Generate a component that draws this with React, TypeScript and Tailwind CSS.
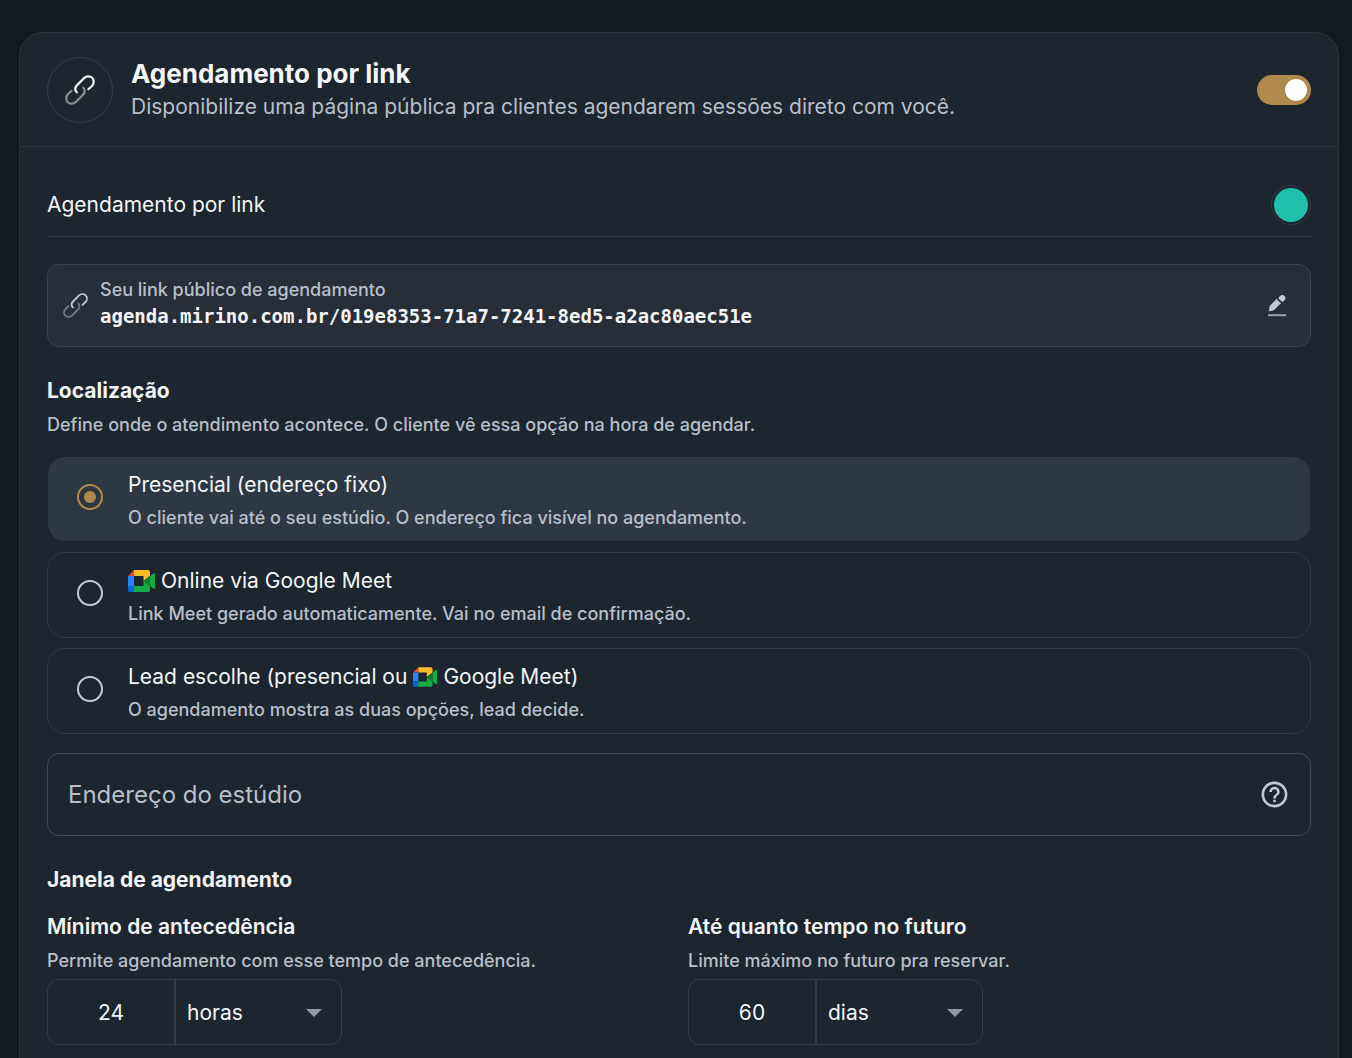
import React from "react";

type IconProps = { className?: string };

function LinkIcon({ className }: IconProps) {
  return (
    <svg viewBox="0 0 30 30" fill="none" stroke="currentColor" strokeWidth="2.2" strokeLinecap="round" className={className} aria-hidden="true">
      <path d="M11.8 17.4C9.9 15.2 9.9 12.3 12 10.2L19.3 2.9C21.6 .9 25.2 .9 27.2 2.8C29.2 4.8 29.2 8.4 27.2 10.7L23.4 14.2" />
      <path opacity=".5" d="M18.2 12.6C20.1 14.8 20.1 17.7 18 19.8L10.7 27.1C8.4 29.1 4.8 29.1 2.8 27.2C.8 25.2 .8 21.6 2.8 19.3L6.6 15.8" />
    </svg>
  );
}

function PencilIcon({ className }: IconProps) {
  return (
    <svg viewBox="0 0 18 22" fill="currentColor" className={className} aria-hidden="true">
      <path d="M1 16.2L1.3 12.6Q1.5 11.3 2.4 10.3L8.8 3.8Q9.9 6.9 13.1 8L6.7 14.6Q5.7 15.6 4.5 15.8Z" />
      <path d="M10.4 2.7L11.8 1.3A3 3 0 0 1 16.6 5.2L14.5 7.1Q11.4 5.9 10.4 2.7Z" />
      <path opacity=".75" d="M0 19.2h18v2H0z" />
    </svg>
  );
}

function MeetIcon({ className }: IconProps) {
  return (
    <svg viewBox="0 0 27 22" className={className} aria-hidden="true">
      <path fill="#ea4335" d="M6 0V6H0Z" />
      <path fill="#2684fc" d="M0 6H6V16H0Z" />
      <path fill="#0066da" d="M0 16H6V22H1.6Q0 22 0 20.4Z" />
      <path fill="#ffba2c" d="M6 0H20Q22 0 22 2V6L15.5 11V6H6Z" />
      <path fill="#16ac47" d="M6 16H15.5V11L22 16V20Q22 22 20 22H6Z" />
      <path fill="#16ac47" d="M22 6.2L25.7 3.2Q27 2.4 27 4V18Q27 19.6 25.7 18.8L22 15.8Z" />
      <path fill="#00832d" d="M15.5 11L22 5.8V16.2Z" />
    </svg>
  );
}

function HelpIcon({ className }: IconProps) {
  return (
    <svg viewBox="0 0 24 24" fill="currentColor" className={className} aria-hidden="true">
      <path d="M11 18h2v-2h-2v2zm1-16C6.480 2 2 6.480 2 12s4.480 10 10 10 10-4.480 10-10S17.520 2 12 2zm0 18c-4.410 0-8-3.590-8-8s3.590-8 8-8 8 3.590 8 8-3.590 8-8 8zm0-14c-2.210 0-4 1.790-4 4h2c0-1.100.9-2 2-2s2 .9 2 2c0 2-3 1.750-3 5h2c0-2.250 3-2.500 3-5 0-2.210-1.790-4-4-4z" />
    </svg>
  );
}

type OptionProps = { id: string; title: React.ReactNode; text: string; defaultChecked?: boolean };

function LocationOption({ id, title, text, defaultChecked }: OptionProps) {
  return (
    <label
      htmlFor={id}
      className="flex cursor-pointer gap-[25px] rounded-[18px] border border-[#303b45] pt-[13px] pr-6 pb-[7px] pl-[29px] has-checked:border-[#1d252e] has-checked:bg-[#2e3842]"
    >
      <input
        id={id}
        type="radio"
        name="local"
        defaultChecked={defaultChecked}
        className="mt-[14px] grid size-[26px] shrink-0 cursor-pointer appearance-none place-content-center rounded-full border-2 border-[#c3c9d3] before:size-3 before:rounded-full checked:border-[#b08a4a] checked:before:bg-[#b08a4a]"
      />
      <span className="flex flex-col">
        <span className="flex h-[30px] items-center text-[21px] text-[#f3f5f7]">{title}</span>
        <span className="flex h-[34px] items-center text-[18px] font-medium text-[#b9bfc9]">{text}</span>
      </span>
    </label>
  );
}

type DurationProps = { id: string; title: string; text: string; value: string; unit: string };

function DurationField({ id, title, text, value, unit }: DurationProps) {
  return (
    <div>
      <label htmlFor={id} className="block text-[21px] leading-[30px] font-semibold text-[#f3f5f7]">
        {title}
      </label>
      <p className="mt-1 text-[18px] leading-[30px] font-medium text-[#b9bfc9]">{text}</p>
      <div className="mt-[3px] flex h-[66px] w-[295px] rounded-[12px] border border-[#323d46] text-[21px] text-[#f3f5f7]">
        <input id={id} defaultValue={value} className="w-32 border-r-2 border-[#323d46] bg-transparent pt-[2px] text-center outline-none" />
        <div className="relative flex-1">
          <select aria-label={`Unidade de ${title}`} defaultValue={unit} className="size-full appearance-none bg-transparent pt-[2px] pl-[11px] outline-none">
            <option>{unit}</option>
            <option>semanas</option>
          </select>
          <svg viewBox="0 0 16 8" className="pointer-events-none absolute top-[29px] right-[19px] h-2 w-4 fill-[#8f99a8]" aria-hidden="true">
            <path d="M0 0H16L8 8Z" />
          </svg>
        </div>
      </div>
    </div>
  );
}

export default function App() {
  return (
    <div className="min-h-screen bg-[#131920] pt-8 pr-[13px] pl-[19px] font-['Inter',sans-serif]">
      <main className="rounded-[24px] border border-[#2c363f] bg-[#1d252e] pb-10">
        <header className="flex items-center border-b border-[#2c363f] px-[27px] pt-6 pb-[23px]">
          <div className="grid size-[66px] shrink-0 place-items-center rounded-full border border-[#35414b] text-[#f3f5f7]">
            <LinkIcon className="size-[30px]" />
          </div>
          <div className="ml-[18px] flex-1">
            <h1 className="text-[26px] leading-[34px] font-bold text-[#f3f5f7]">Agendamento por link</h1>
            <p className="text-[21px] leading-8 text-[#b9bfc9]">Disponibilize uma página pública pra clientes agendarem sessões direto com você.</p>
          </div>
          <button
            type="button"
            role="switch"
            aria-checked="true"
            aria-label="Ativar agendamento por link"
            className="flex h-[30px] w-[54px] items-center justify-end rounded-full bg-[#b08a4a] pr-1"
          >
            <span className="size-[22px] rounded-full bg-white shadow" />
          </button>
        </header>

        <div className="px-[27px] pt-[38px]">
          <div className="flex items-start justify-between border-b border-[#323d46] pb-[11px]">
            <h2 className="text-[21px] leading-10 text-[#f3f5f7]">Agendamento por link</h2>
            <button type="button" aria-label="Cor do agendamento" className="grid size-10 place-items-center rounded-full border border-[#303b45]">
              <span className="size-[34px] rounded-full bg-[#20bfa9]" />
            </button>
          </div>

          <section className="mt-[27px] flex h-[83px] items-center rounded-[12px] border border-[#37434c] bg-[#272e38] pr-6 pl-[15px]">
            <LinkIcon className="size-[25px] shrink-0 text-[#c3c9d3]" />
            <div className="ml-3 flex-1">
              <p className="text-[18px] leading-6 font-medium text-[#b9bfc9]">Seu link público de agendamento</p>
              <p className="pb-1 font-['DejaVu_Sans_Mono',monospace] text-[19px] leading-7 font-bold text-[#f3f5f7]">agenda.mirino.com.br/019e8353-71a7-7241-8ed5-a2ac80aec51e</p>
            </div>
            <button type="button" aria-label="Editar link" className="text-[#c3c9d3]">
              <PencilIcon className="h-[22px] w-[18px]" />
            </button>
          </section>

          <section className="mt-7">
            <h2 className="text-[21px] leading-8 font-bold text-[#f3f5f7]">Localização</h2>
            <p className="mt-1 text-[18px] leading-7 font-medium text-[#b9bfc9]">Define onde o atendimento acontece. O cliente vê essa opção na hora de agendar.</p>
            <div className="mt-[17px] flex flex-col gap-[10px]">
              <LocationOption id="presencial" defaultChecked title="Presencial (endereço fixo)" text="O cliente vai até o seu estúdio. O endereço fica visível no agendamento." />
              <LocationOption
                id="online"
                title={
                  <>
                    <MeetIcon className="mr-[6px] h-[22px] w-[27px]" />
                    Online via Google Meet
                  </>
                }
                text="Link Meet gerado automaticamente. Vai no email de confirmação."
              />
              <LocationOption
                id="escolhe"
                title={
                  <>
                    Lead escolhe (presencial ou
                    <MeetIcon className="mx-[6px] h-5 w-6" />
                    Google Meet)
                  </>
                }
                text="O agendamento mostra as duas opções, lead decide."
              />
            </div>
            <div className="mt-[19px] flex h-[83px] items-center rounded-[12px] border border-[#404b55] px-5">
              <input
                aria-label="Endereço do estúdio"
                placeholder="Endereço do estúdio"
                className="h-full min-w-0 flex-1 bg-transparent text-[24px] outline-none placeholder:text-[#b9bfc9]"
              />
              <button type="button" aria-label="Ajuda" className="text-[#c3c9d3]">
                <HelpIcon className="size-[31px]" />
              </button>
            </div>
          </section>

          <section className="mt-7">
            <h2 className="text-[21px] leading-8 font-bold text-[#f3f5f7]">Janela de agendamento</h2>
            <div className="mt-4 grid grid-cols-2 gap-[18px]">
              <DurationField id="minimo" title="Mínimo de antecedência" text="Permite agendamento com esse tempo de antecedência." value="24" unit="horas" />
              <DurationField id="maximo" title="Até quanto tempo no futuro" text="Limite máximo no futuro pra reservar." value="60" unit="dias" />
            </div>
          </section>
        </div>
      </main>
    </div>
  );
}
